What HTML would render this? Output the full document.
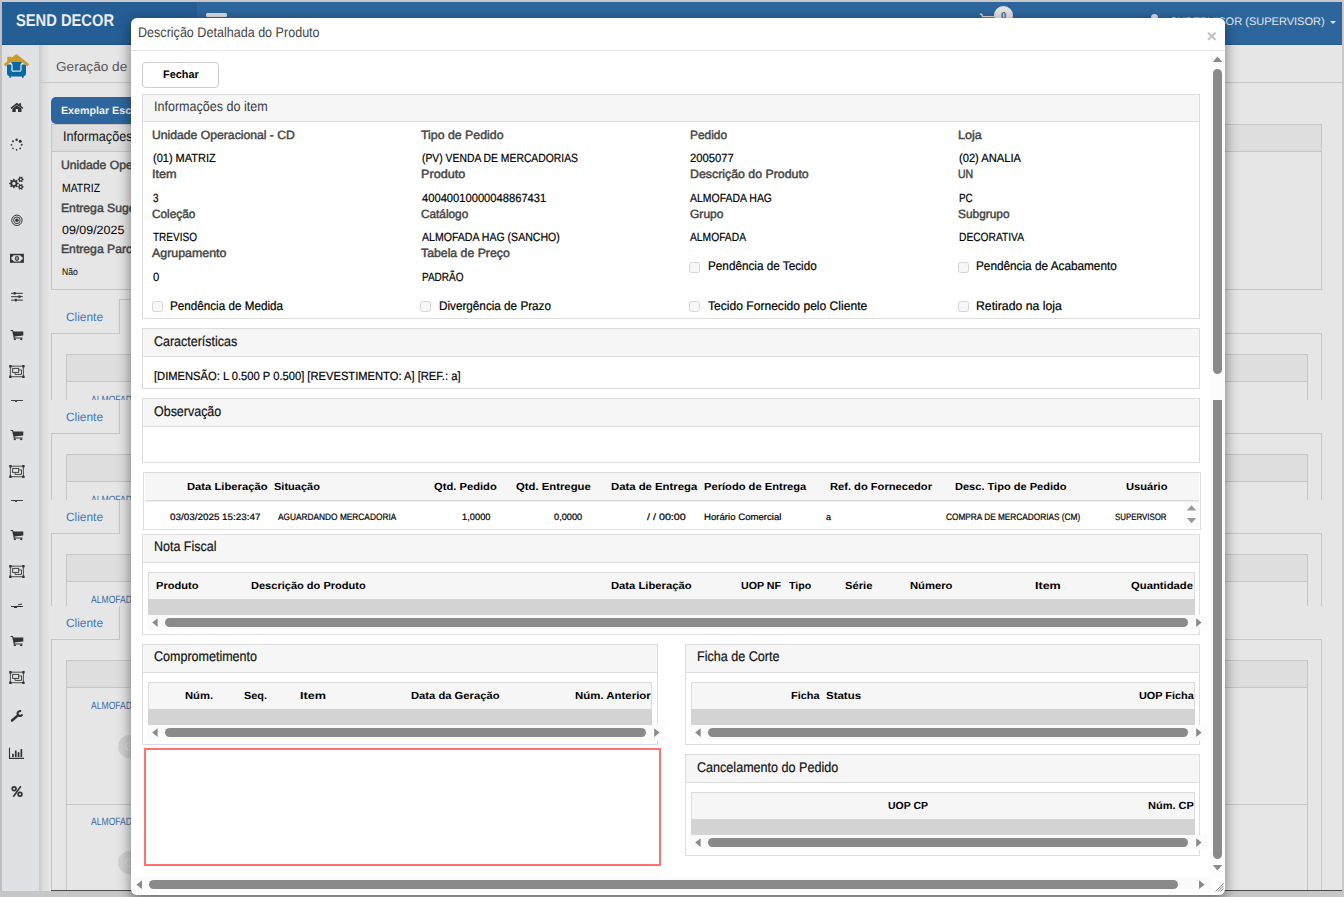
<!DOCTYPE html>
<html>
<head>
<meta charset="utf-8">
<title>Descrição Detalhada do Produto</title>
<style>
*{box-sizing:border-box;margin:0;padding:0}
html,body{width:1344px;height:897px;overflow:hidden;background:#e6e6e6;font-family:"Liberation Sans",sans-serif}
div,span,svg{position:absolute}
.t{white-space:nowrap;line-height:1;transform-origin:0 0;text-rendering:geometricPrecision}
#page{left:0;top:0;width:1344px;height:897px;overflow:hidden;background:#e6e6e6}
#mlayer{left:0;top:0;width:1344px;height:897px;overflow:hidden}
#modalbox{left:131px;top:18px;width:1094px;height:877px;background:#fff;border-radius:6px;box-shadow:0 4px 14px rgba(0,0,0,.5)}
.pn{border:1px solid #ddd;background:#fff}
.ph{left:0;top:0;right:0;height:28px;background:#f6f6f6;border-bottom:1px solid #ddd}
.gh{background:#f6f6f6;border:1px solid #ddd;border-bottom:none}
.gb{background:#d3d3d3}
.tr{background:#fafafa}
.sb{background:#8a8a8a;border-radius:5px}
.cb{width:11px;height:11px;border:1px solid #d6d6d6;border-radius:2.5px;background:#f7f7f7}
.ln{background:#c6c6c6}
</style>
</head>
<body>
<div id="page">
<div style="left:2px;top:2px;width:1340px;height:43px;background:#2d669d;border-bottom:1px solid #255b8f"></div>
<div style="left:2px;top:2px;width:195px;height:43px;background:#245e95;border-bottom:1px solid #1d5286"></div>
<div style="left:206px;top:13px;width:21px;height:3.7px;background:#dedede;border-radius:1.5px"></div>
<svg style="left:979px;top:13px" width="16" height="6" viewBox="0 0 16 6"><path d="M0.8 1.2 H2.6 L3.6 3.6 H15" stroke="#dcdcdc" stroke-width="1.3" fill="none"/></svg>
<div style="left:993.9px;top:5.8px;width:19.2px;height:19.2px;border-radius:50%;background:#e3e3e3"></div>
<div style="left:1151.4px;top:14.3px;width:6.8px;height:7px;border-radius:50%;background:#dcdcdc"></div>
<svg style="left:1330px;top:21px" width="6" height="3" viewBox="0 0 6 3"><path d="M0 0 H6 L3 3 Z" fill="#e6e6e6"/></svg>
<div style="left:2px;top:45px;width:37px;height:846px;background:#dfe1e4;"></div>
<div style="left:39px;top:45px;width:11px;height:846px;background:linear-gradient(to right,#cbcbcb,#dcdcdc 40%,#e6e6e6);"></div>
<div style="left:39px;top:82px;width:1303px;height:1px;background:#c6c6c6;"></div>
<svg style="left:2px;top:48px;overflow:visible" width="31" height="37" viewBox="0 0 31 37"><g transform="translate(0.00 0.00)"><path d="M14.4 5.9 L27 16 L25.7 18.5 L20 14 L8.8 14 L3.2 18.5 L2 16 L5.3 13.3 V8.7 H9.5 V9.8 Z" fill="#cc9a27"/><path d="M5 17.6 Q5 16.6 6.3 16.6 H8.3 Q9.4 16.6 9.4 17.8 V22 Q9.4 24 11.5 24 H17.4 Q19.5 24 19.5 22 V17.8 Q19.5 16.6 20.6 16.6 H22.6 Q24 16.6 24 17.6 V25.5 Q24 27.4 21.8 28.3 L21.3 29.9 H20.4 L19.8 28.6 H9.2 L8.6 29.9 H7.7 L7.2 28.3 Q5 27.4 5 25.5 Z" fill="#0a68a2"/><path d="M9 14 H20 L18.4 16.8 V22.4 H10.6 V16.8 Z" fill="#0a68a2"/><path d="M9.9 17.5 V22 Q9.9 23.5 11.5 23.5 H17.4 Q19 23.5 19 22 V17.5" stroke="#9fc3da" stroke-width="1" fill="none"/></g></svg>
<svg style="left:10px;top:102px;overflow:visible" width="14" height="11" viewBox="0 0 14 11"><g transform="translate(0.55 0.60)"><path d="M6.35 0.2 L0 5.2 L0.85 6.3 L6.35 2.1 L11.85 6.3 L12.7 5.2 L10.5 3.5 V0.7 H8.6 V2 Z M6.35 2.6 L1.8 6.1 V9.3 H5.2 V6.4 H7.5 V9.3 H10.9 V6.1 Z" fill="#333"/></g></svg>
<svg style="left:10px;top:138px;overflow:visible" width="14" height="14" viewBox="0 0 14 14"><g transform="translate(0.30 0.50)"><circle cx="9.91" cy="2.69" r="1.55" fill="#333"/><circle cx="6.30" cy="1.20" r="1.25" fill="#333"/><circle cx="2.69" cy="2.69" r="1.00" fill="#333"/><circle cx="1.20" cy="6.30" r="0.85" fill="#333"/><circle cx="2.69" cy="9.91" r="0.80" fill="#333"/><circle cx="6.30" cy="11.40" r="0.80" fill="#333"/><circle cx="9.91" cy="9.91" r="0.85" fill="#333"/><circle cx="11.40" cy="6.30" r="0.95" fill="#333"/></g></svg>
<svg style="left:9px;top:176px;overflow:visible" width="16" height="14" viewBox="0 0 16 14"><g transform="translate(0.10 0.30)"><path d="M9.57 6.68 L9.57 7.72 L8.16 8.18 L7.87 8.88 L8.54 10.21 L7.81 10.94 L6.48 10.27 L5.78 10.56 L5.32 11.97 L4.28 11.97 L3.82 10.56 L3.12 10.27 L1.79 10.94 L1.06 10.21 L1.73 8.88 L1.44 8.18 L0.03 7.72 L0.03 6.68 L1.44 6.22 L1.73 5.52 L1.06 4.19 L1.79 3.46 L3.12 4.13 L3.82 3.84 L4.28 2.43 L5.32 2.43 L5.78 3.84 L6.48 4.13 L7.81 3.46 L8.54 4.19 L7.87 5.52 L8.16 6.22 Z M3.10 7.20 a1.70 1.70 0 1 0 3.40 0 a1.70 1.70 0 1 0 -3.40 0 Z" fill="#333" fill-rule="evenodd"/><path d="M14.57 2.67 L14.57 3.53 L13.55 3.88 L13.25 4.40 L13.46 5.46 L12.71 5.89 L11.90 5.18 L11.30 5.18 L10.49 5.89 L9.74 5.46 L9.95 4.40 L9.65 3.88 L8.63 3.53 L8.63 2.67 L9.65 2.32 L9.95 1.80 L9.74 0.74 L10.49 0.31 L11.30 1.02 L11.90 1.02 L12.71 0.31 L13.46 0.74 L13.25 1.80 L13.55 2.32 Z M10.65 3.10 a0.95 0.95 0 1 0 1.90 0 a0.95 0.95 0 1 0 -1.90 0 Z" fill="#333" fill-rule="evenodd"/><path d="M14.57 10.17 L14.57 11.03 L13.55 11.38 L13.25 11.90 L13.46 12.96 L12.71 13.39 L11.90 12.68 L11.30 12.68 L10.49 13.39 L9.74 12.96 L9.95 11.90 L9.65 11.38 L8.63 11.03 L8.63 10.17 L9.65 9.82 L9.95 9.30 L9.74 8.24 L10.49 7.81 L11.30 8.52 L11.90 8.52 L12.71 7.81 L13.46 8.24 L13.25 9.30 L13.55 9.82 Z M10.65 10.60 a0.95 0.95 0 1 0 1.90 0 a0.95 0.95 0 1 0 -1.90 0 Z" fill="#333" fill-rule="evenodd"/></g></svg>
<svg style="left:10px;top:214px;overflow:visible" width="13" height="13" viewBox="0 0 13 13"><g transform="translate(0.90 0.30)"><circle cx="6" cy="6" r="5.2" fill="none" stroke="#333" stroke-width="1"/><circle cx="6" cy="6" r="3.3" fill="none" stroke="#333" stroke-width="1"/><circle cx="6" cy="6" r="1.8" fill="#333"/></g></svg>
<svg style="left:10px;top:253px;overflow:visible" width="15" height="10" viewBox="0 0 15 10"><g transform="translate(0.00 0.80)"><rect x="0" y="0" width="13.9" height="9" fill="#333"/><path d="M3.6 1.4 H10.3 Q10.6 3 12.5 3.3 V5.7 Q10.6 6 10.3 7.6 H3.6 Q3.3 6 1.4 5.7 V3.3 Q3.3 3 3.6 1.4 Z" fill="#e3e5e8"/><ellipse cx="6.95" cy="4.5" rx="2.1" ry="2.6" fill="#333"/><ellipse cx="6.95" cy="4.5" rx="1.1" ry="1.7" fill="#cfd1d4"/><rect x="6.6" y="3.2" width="0.8" height="2.6" fill="#333"/></g></svg>
<svg style="left:11px;top:291px;overflow:visible" width="13" height="11" viewBox="0 0 13 11"><g transform="translate(0.05 0.70)"><path d="M0 1.6 H11.8 M0 5 H11.8 M0 8.4 H11.8" stroke="#333" stroke-width="1"/><rect x="2.6" y="0.3" width="2" height="2.6" fill="#333"/><rect x="7.4" y="3.7" width="2" height="2.6" fill="#333"/><rect x="3.8" y="7.1" width="2" height="2.6" fill="#333"/></g></svg>
<svg style="left:10px;top:329px;overflow:visible" width="14" height="12" viewBox="0 0 14 12"><g transform="translate(0.60 0.80)"><path d="M0 0.3 H2.3 L2.9 1.6 H12.7 V5.6 L4 6.6 L4.2 7.6 H11.9 V8.6 H3.2 L1.6 1.3 H0 Z" fill="#333"/><rect x="3.2" y="8.6" width="2" height="1.7" fill="#333"/><rect x="9.6" y="8.6" width="2" height="1.7" fill="#333"/></g></svg>
<svg style="left:9px;top:365px;overflow:visible" width="17" height="14" viewBox="0 0 17 14"><g transform="translate(0.20 0.00)"><rect x="1.2" y="1.2" width="13" height="10.5" fill="none" stroke="#5a5a5a" stroke-width="1.1"/><rect x="0" y="0" width="2.4" height="2.4" rx="0.5" fill="#333"/><rect x="13" y="0" width="2.4" height="2.4" rx="0.5" fill="#333"/><rect x="0" y="10.5" width="2.4" height="2.4" rx="0.5" fill="#333"/><rect x="13" y="10.5" width="2.4" height="2.4" rx="0.5" fill="#333"/><path d="M5.9 7.6 V9.4 H12.3 V4.9 H9.6" fill="none" stroke="#444" stroke-width="1"/><rect x="3.4" y="3.4" width="6" height="4" fill="#dfe1e4" stroke="#444" stroke-width="1"/></g></svg>
<svg style="left:10px;top:429px;overflow:visible" width="14" height="12" viewBox="0 0 14 12"><g transform="translate(0.60 0.80)"><path d="M0 0.3 H2.3 L2.9 1.6 H12.7 V5.6 L4 6.6 L4.2 7.6 H11.9 V8.6 H3.2 L1.6 1.3 H0 Z" fill="#333"/><rect x="3.2" y="8.6" width="2" height="1.7" fill="#333"/><rect x="9.6" y="8.6" width="2" height="1.7" fill="#333"/></g></svg>
<svg style="left:9px;top:465px;overflow:visible" width="17" height="14" viewBox="0 0 17 14"><g transform="translate(0.20 0.00)"><rect x="1.2" y="1.2" width="13" height="10.5" fill="none" stroke="#5a5a5a" stroke-width="1.1"/><rect x="0" y="0" width="2.4" height="2.4" rx="0.5" fill="#333"/><rect x="13" y="0" width="2.4" height="2.4" rx="0.5" fill="#333"/><rect x="0" y="10.5" width="2.4" height="2.4" rx="0.5" fill="#333"/><rect x="13" y="10.5" width="2.4" height="2.4" rx="0.5" fill="#333"/><path d="M5.9 7.6 V9.4 H12.3 V4.9 H9.6" fill="none" stroke="#444" stroke-width="1"/><rect x="3.4" y="3.4" width="6" height="4" fill="#dfe1e4" stroke="#444" stroke-width="1"/></g></svg>
<svg style="left:10px;top:529px;overflow:visible" width="14" height="12" viewBox="0 0 14 12"><g transform="translate(0.60 0.80)"><path d="M0 0.3 H2.3 L2.9 1.6 H12.7 V5.6 L4 6.6 L4.2 7.6 H11.9 V8.6 H3.2 L1.6 1.3 H0 Z" fill="#333"/><rect x="3.2" y="8.6" width="2" height="1.7" fill="#333"/><rect x="9.6" y="8.6" width="2" height="1.7" fill="#333"/></g></svg>
<svg style="left:9px;top:565px;overflow:visible" width="17" height="14" viewBox="0 0 17 14"><g transform="translate(0.20 0.00)"><rect x="1.2" y="1.2" width="13" height="10.5" fill="none" stroke="#5a5a5a" stroke-width="1.1"/><rect x="0" y="0" width="2.4" height="2.4" rx="0.5" fill="#333"/><rect x="13" y="0" width="2.4" height="2.4" rx="0.5" fill="#333"/><rect x="0" y="10.5" width="2.4" height="2.4" rx="0.5" fill="#333"/><rect x="13" y="10.5" width="2.4" height="2.4" rx="0.5" fill="#333"/><path d="M5.9 7.6 V9.4 H12.3 V4.9 H9.6" fill="none" stroke="#444" stroke-width="1"/><rect x="3.4" y="3.4" width="6" height="4" fill="#dfe1e4" stroke="#444" stroke-width="1"/></g></svg>
<svg style="left:10px;top:635px;overflow:visible" width="14" height="12" viewBox="0 0 14 12"><g transform="translate(0.60 0.80)"><path d="M0 0.3 H2.3 L2.9 1.6 H12.7 V5.6 L4 6.6 L4.2 7.6 H11.9 V8.6 H3.2 L1.6 1.3 H0 Z" fill="#333"/><rect x="3.2" y="8.6" width="2" height="1.7" fill="#333"/><rect x="9.6" y="8.6" width="2" height="1.7" fill="#333"/></g></svg>
<svg style="left:9px;top:671px;overflow:visible" width="17" height="14" viewBox="0 0 17 14"><g transform="translate(0.20 0.00)"><rect x="1.2" y="1.2" width="13" height="10.5" fill="none" stroke="#5a5a5a" stroke-width="1.1"/><rect x="0" y="0" width="2.4" height="2.4" rx="0.5" fill="#333"/><rect x="13" y="0" width="2.4" height="2.4" rx="0.5" fill="#333"/><rect x="0" y="10.5" width="2.4" height="2.4" rx="0.5" fill="#333"/><rect x="13" y="10.5" width="2.4" height="2.4" rx="0.5" fill="#333"/><path d="M5.9 7.6 V9.4 H12.3 V4.9 H9.6" fill="none" stroke="#444" stroke-width="1"/><rect x="3.4" y="3.4" width="6" height="4" fill="#dfe1e4" stroke="#444" stroke-width="1"/></g></svg>
<div style="left:11px;top:400px;width:12px;height:1px;background:#444"></div><div style="left:14.6px;top:400.6px;width:2px;height:1.6px;background:#444"></div>
<div style="left:11px;top:500px;width:12px;height:1px;background:#444"></div><div style="left:14.6px;top:500.6px;width:2px;height:1.6px;background:#444"></div>
<div style="left:11px;top:606px;width:12px;height:1.2px;background:#333"></div><div style="left:14px;top:606.4px;width:2.6px;height:1.5px;background:#333"></div><div style="left:17.5px;top:604.3px;width:4px;height:1px;background:#333;transform:rotate(-12deg)"></div>
<svg style="left:10px;top:710px;overflow:visible" width="14" height="13" viewBox="0 0 14 13"><g transform="translate(0.70 0.00)"><path d="M1.3 10.5 L7.6 5.1" stroke="#333" stroke-width="2.5" stroke-linecap="round"/><path d="M11.60 4.34 A2.45 2.45 0 1 1 10.45 1.34" fill="none" stroke="#333" stroke-width="2"/></g></svg>
<svg style="left:9px;top:747px;overflow:visible" width="16" height="13" viewBox="0 0 16 13"><g transform="translate(0.00 0.80)"><path d="M0.5 0 V10.6 H15" stroke="#333" stroke-width="1.1" fill="none"/><rect x="3.1" y="6" width="1.7" height="3.2" fill="#333"/><rect x="5.9" y="2.7" width="1.7" height="6.5" fill="#333"/><rect x="8.7" y="4.4" width="1.7" height="4.8" fill="#333"/><rect x="11.5" y="1.3" width="1.7" height="7.9" fill="#333"/></g></svg>
<svg style="left:11px;top:786px;overflow:visible" width="13" height="12" viewBox="0 0 13 12"><g transform="translate(0.40 0.00)"><circle cx="2.7" cy="2.8" r="1.9" fill="none" stroke="#333" stroke-width="1.7"/><circle cx="8.6" cy="8.2" r="1.9" fill="none" stroke="#333" stroke-width="1.7"/><path d="M9.4 0.3 L1.9 10.7" stroke="#333" stroke-width="1.6"/></g></svg>
<div style="left:51px;top:97px;width:200px;height:27px;background:#2d669d;border-radius:5px 0 0 5px"></div>
<div style="left:51px;top:124px;width:1271px;height:166px;background:transparent;border:1px solid #c6c6c6"></div>
<div style="left:52px;top:125px;width:1269px;height:26px;background:#dedede;"></div>
<div style="left:52px;top:151px;width:1269px;height:1px;background:#c6c6c6;"></div>
<div style="left:119px;top:299px;width:1px;height:34px;background:#c6c6c6;"></div>
<div style="left:119px;top:299px;width:300px;height:1px;background:#c6c6c6;"></div>
<div style="left:51px;top:333px;width:69px;height:1px;background:#c6c6c6;"></div>
<div style="left:1200px;top:333px;width:122px;height:1px;background:#c6c6c6;"></div>
<div style="left:51px;top:333px;width:1px;height:67px;background:#c6c6c6;"></div>
<div style="left:1321px;top:333px;width:1px;height:67px;background:#c6c6c6;"></div>
<div style="left:66px;top:354px;width:1242px;height:1px;background:#c6c6c6;"></div>
<div style="left:66px;top:354px;width:1px;height:46px;background:#c6c6c6;"></div>
<div style="left:1307px;top:354px;width:1px;height:46px;background:#c6c6c6;"></div>
<div style="left:67px;top:355px;width:1240px;height:26px;background:#dedede;"></div>
<div style="left:67px;top:381px;width:1240px;height:1px;background:#c6c6c6;"></div>
<div style="left:119px;top:400px;width:1px;height:33px;background:#c6c6c6;"></div>
<div style="left:51px;top:433px;width:69px;height:1px;background:#c6c6c6;"></div>
<div style="left:1200px;top:433px;width:122px;height:1px;background:#c6c6c6;"></div>
<div style="left:51px;top:433px;width:1px;height:67px;background:#c6c6c6;"></div>
<div style="left:1321px;top:433px;width:1px;height:67px;background:#c6c6c6;"></div>
<div style="left:66px;top:454px;width:1242px;height:1px;background:#c6c6c6;"></div>
<div style="left:66px;top:454px;width:1px;height:46px;background:#c6c6c6;"></div>
<div style="left:1307px;top:454px;width:1px;height:46px;background:#c6c6c6;"></div>
<div style="left:67px;top:455px;width:1240px;height:26px;background:#dedede;"></div>
<div style="left:67px;top:481px;width:1240px;height:1px;background:#c6c6c6;"></div>
<div style="left:119px;top:500px;width:1px;height:33px;background:#c6c6c6;"></div>
<div style="left:51px;top:533px;width:69px;height:1px;background:#c6c6c6;"></div>
<div style="left:1200px;top:533px;width:122px;height:1px;background:#c6c6c6;"></div>
<div style="left:51px;top:533px;width:1px;height:73px;background:#c6c6c6;"></div>
<div style="left:1321px;top:533px;width:1px;height:73px;background:#c6c6c6;"></div>
<div style="left:66px;top:554px;width:1242px;height:1px;background:#c6c6c6;"></div>
<div style="left:66px;top:554px;width:1px;height:52px;background:#c6c6c6;"></div>
<div style="left:1307px;top:554px;width:1px;height:52px;background:#c6c6c6;"></div>
<div style="left:67px;top:555px;width:1240px;height:26px;background:#dedede;"></div>
<div style="left:67px;top:581px;width:1240px;height:1px;background:#c6c6c6;"></div>
<div style="left:119px;top:606px;width:1px;height:33px;background:#c6c6c6;"></div>
<div style="left:51px;top:639px;width:69px;height:1px;background:#c6c6c6;"></div>
<div style="left:1200px;top:639px;width:122px;height:1px;background:#c6c6c6;"></div>
<div style="left:51px;top:639px;width:1px;height:251px;background:#c6c6c6;"></div>
<div style="left:1321px;top:639px;width:1px;height:251px;background:#c6c6c6;"></div>
<div style="left:66px;top:660px;width:1242px;height:1px;background:#c6c6c6;"></div>
<div style="left:66px;top:660px;width:1px;height:230px;background:#c6c6c6;"></div>
<div style="left:1307px;top:660px;width:1px;height:230px;background:#c6c6c6;"></div>
<div style="left:67px;top:661px;width:1240px;height:26px;background:#dedede;"></div>
<div style="left:67px;top:687px;width:1240px;height:1px;background:#c6c6c6;"></div>
<div style="left:67px;top:804px;width:1240px;height:1px;background:#c6c6c6;"></div>
<div style="left:51px;top:890px;width:1291px;height:1px;background:#4a4a4a;"></div>
<div style="left:118px;top:734.5px;width:23px;height:23px;border-radius:50%;background:#d2d2d2"></div>
<div style="left:125px;top:741.5px;width:9px;height:9px;border-radius:50%;border:1.5px solid #e4e4e4"></div>
<div style="left:118px;top:850.5px;width:23px;height:23px;border-radius:50%;background:#d2d2d2"></div>
<div style="left:125px;top:857.5px;width:9px;height:9px;border-radius:50%;border:1.5px solid #e4e4e4"></div>
<div style="left:0px;top:0px;width:1344px;height:2px;background:#c8c8c8;"></div>
<div style="left:0px;top:0px;width:2px;height:897px;background:#c0c0c0;"></div>
<div style="left:1342px;top:0px;width:2px;height:897px;background:#c8c8c8;"></div>
<div style="left:0px;top:891px;width:1344px;height:6px;background:#c6c6c6;"></div>

<span class="t" style="left:15.75px;top:12px;font-size:17px;color:#ececec;font-weight:bold;transform:scaleX(0.8645);">SEND DECOR</span>
<span class="t" style="left:55.75px;top:60px;font-size:13px;color:#555;transform:scaleX(1.0488);">Geração de Pedido</span>
<span class="t" style="left:61.40px;top:106px;font-size:10.5px;color:#f2f2f2;font-weight:bold;transform:scaleX(1.0173);">Exemplar Escolhido</span>
<span class="t" style="left:62.80px;top:129px;font-size:14px;color:#111;transform:scaleX(0.9023);">Informações</span>
<span class="t" style="left:61.40px;top:159px;font-size:12px;color:#454545;transform:scaleX(1.0150);-webkit-text-stroke:0.45px #454545;">Unidade Operacional</span>
<span class="t" style="left:61.70px;top:182px;font-size:12px;color:#000;transform:scaleX(0.8691);">MATRIZ</span>
<span class="t" style="left:61.20px;top:202px;font-size:12px;color:#454545;transform:scaleX(1.0150);-webkit-text-stroke:0.45px #454545;">Entrega Sugerida</span>
<span class="t" style="left:61.70px;top:224px;font-size:12px;color:#000;transform:scaleX(1.0373);">09/09/2025</span>
<span class="t" style="left:61.20px;top:243px;font-size:12px;color:#454545;transform:scaleX(1.0150);-webkit-text-stroke:0.45px #454545;">Entrega Parcial</span>
<span class="t" style="left:62.10px;top:268px;font-size:9.75px;color:#000;transform:scaleX(0.8776);">Não</span>
<span class="t" style="left:1169.70px;top:17px;font-size:11px;color:#e6e6e6;transform:scaleX(1.0029);">SUPERVISOR (SUPERVISOR)</span>
<span class="t" style="left:1001.00px;top:12px;font-size:10px;color:#2d5f9a;font-weight:bold;transform:scaleX(0.9348);">0</span>
<span class="t" style="left:66.00px;top:311px;font-size:12px;color:#3f77b5;transform:scaleX(0.9904);">Cliente</span>
<span class="t" style="left:66.00px;top:411px;font-size:12px;color:#3f77b5;transform:scaleX(0.9904);">Cliente</span>
<span class="t" style="left:66.00px;top:511px;font-size:12px;color:#3f77b5;transform:scaleX(0.9904);">Cliente</span>
<span class="t" style="left:66.00px;top:617px;font-size:12px;color:#3f77b5;transform:scaleX(0.9904);">Cliente</span>
<div style="left:0;top:380px;width:400px;height:20px;overflow:hidden"><span class="t" style="left:90.60px;top:15px;font-size:10.5px;color:#3a6aa5;transform:scaleX(0.8169);">ALMOFADA HAG</span></div>
<div style="left:0;top:494px;width:400px;height:6px;overflow:hidden"><span class="t" style="left:90.60px;top:1px;font-size:10.5px;color:#3a6aa5;transform:scaleX(0.8169);">ALMOFADA HAG</span></div>
<div style="left:0;top:590px;width:400px;height:16px;overflow:hidden"><span class="t" style="left:90.60px;top:5px;font-size:10.5px;color:#3a6aa5;transform:scaleX(0.8169);">ALMOFADA HAG</span></div>
<span class="t" style="left:90.60px;top:701px;font-size:10.5px;color:#3a6aa5;transform:scaleX(0.8169);">ALMOFADA HAG</span>
<span class="t" style="left:90.60px;top:817px;font-size:10.5px;color:#3a6aa5;transform:scaleX(0.8169);">ALMOFADA HAG</span>
</div>
<div id="modalbox"></div>
<div id="mlayer">
<div style="left:131px;top:50px;width:1094px;height:1px;background:#e5e5e5"></div>
<svg style="left:1207px;top:32px" width="10" height="9" viewBox="0 0 10 9"><path d="M1 0.8 L8.6 7.8 M8.6 0.8 L1 7.8" stroke="#c2c2c2" stroke-width="2.2" fill="none"/></svg>
<!-- vertical scrollbar -->
<div class="tr" style="left:1210px;top:51px;width:15px;height:826px;background:#fcfcfc"></div>
<svg style="left:1212px;top:56px" width="11" height="6" viewBox="0 0 11 6"><path d="M0.8 6 L5.5 0.6 L10.2 6 Z" fill="#8a8a8a"/></svg>
<div class="sb" style="left:1213px;top:69px;width:9px;height:305px;border-radius:4.5px"></div>
<div class="sb" style="left:1213px;top:400px;width:9px;height:459px;border-radius:0 0 4.5px 4.5px"></div>
<svg style="left:1212px;top:865px" width="11" height="6" viewBox="0 0 11 6"><path d="M0.8 0 L5.5 5.4 L10.2 0 Z" fill="#8a8a8a"/></svg>
<!-- bottom scrollbar -->
<div class="tr" style="left:132px;top:877px;width:1078px;height:16px;background:#fbfbfb"></div>
<svg style="left:136px;top:880px" width="6" height="10" viewBox="0 0 6 10"><path d="M6 0.3 L0.4 4.7 L6 9.1 Z" fill="#8a8a8a"/></svg>
<div class="sb" style="left:149px;top:880px;width:1029px;height:9px;border-radius:4.5px"></div>
<svg style="left:1199px;top:880px" width="6" height="10" viewBox="0 0 6 10"><path d="M0 0.3 L5.6 4.7 L0 9.1 Z" fill="#8a8a8a"/></svg>
<svg style="left:1215px;top:883px" width="9" height="9" viewBox="0 0 9 9"><path d="M8.5 0.5 L0.5 8.5 M8.5 3 L3 8.5 M8.5 5.5 L5.5 8.5" stroke="#777" stroke-width="1" fill="none"/></svg>
<!-- Fechar -->
<div style="left:142px;top:62px;width:77px;height:26px;border:1px solid #ccc;border-radius:4px;background:#fff"></div>
<!-- panel 1 -->
<div class="pn" style="left:142px;top:94px;width:1058px;height:225px"><div class="ph" style="height:27px"></div></div>
<div class="cb" style="left:689px;top:262px"></div>
<div class="cb" style="left:958px;top:262px"></div>
<div class="cb" style="left:152px;top:301px"></div>
<div class="cb" style="left:420px;top:301px"></div>
<div class="cb" style="left:689px;top:301px"></div>
<div class="cb" style="left:958px;top:301px"></div>
<!-- panel 2,3 -->
<div class="pn" style="left:142px;top:328px;width:1058px;height:61px"><div class="ph"></div></div>
<div class="pn" style="left:142px;top:398px;width:1058px;height:65px"><div class="ph"></div></div>
<!-- table -->
<div class="pn" style="left:143px;top:472px;width:1058px;height:58px"></div>
<div style="left:145px;top:473px;width:1054px;height:27px;background:#f6f6f6"></div>
<div style="left:145px;top:500px;width:1054px;height:1px;background:#dadada"></div>
<div style="left:145px;top:501px;width:1054px;height:1px;background:#ececec"></div>
<div style="left:1184px;top:502px;width:15px;height:25px;background:#fafafa"></div>
<svg style="left:1186px;top:505px" width="11" height="6" viewBox="0 0 11 6"><path d="M0.8 5.4 L5.5 0.2 L10.2 5.4 Z" fill="#9a9a9a"/></svg>
<svg style="left:1186px;top:518px" width="11" height="6" viewBox="0 0 11 6"><path d="M0.8 0 L5.5 5.2 L10.2 0 Z" fill="#9a9a9a"/></svg>
<!-- Nota fiscal -->
<div class="pn" style="left:142px;top:534px;width:1058px;height:101px"><div class="ph"></div></div>
<div class="gh" style="left:148px;top:572px;width:1047px;height:27px"></div>
<div class="gb" style="left:148px;top:599px;width:1047px;height:16px"></div>
<div class="tr" style="left:147px;top:615px;width:1052px;height:15px"></div>
<svg style="left:152px;top:618px" width="6" height="10" viewBox="0 0 6 10"><path d="M5.6 0.2 L0.2 4.6 L5.6 9 Z" fill="#8a8a8a"/></svg>
<div class="sb" style="left:165px;top:618px;width:1023px;height:9px;border-radius:4.5px"></div>
<svg style="left:1196px;top:618px" width="6" height="10" viewBox="0 0 6 10"><path d="M0.2 0.2 L5.6 4.6 L0.2 9 Z" fill="#8a8a8a"/></svg>
<!-- Comprometimento -->
<div class="pn" style="left:142px;top:644px;width:516px;height:101px"><div class="ph"></div></div>
<div class="gh" style="left:148px;top:682px;width:504px;height:27px"></div>
<div class="gb" style="left:148px;top:709px;width:504px;height:16px"></div>
<div class="tr" style="left:147px;top:725px;width:510px;height:15px"></div>
<svg style="left:152px;top:728px" width="6" height="10" viewBox="0 0 6 10"><path d="M5.6 0.2 L0.2 4.6 L5.6 9 Z" fill="#8a8a8a"/></svg>
<div class="sb" style="left:165px;top:728px;width:481px;height:9px;border-radius:4.5px"></div>
<svg style="left:654px;top:728px" width="6" height="10" viewBox="0 0 6 10"><path d="M0.2 0.2 L5.6 4.6 L0.2 9 Z" fill="#8a8a8a"/></svg>
<!-- red box -->
<div style="left:144px;top:748px;width:517px;height:118px;border:2px solid #ff7272;background:#fff"></div>
<!-- Ficha de corte -->
<div class="pn" style="left:685px;top:644px;width:515px;height:101px"><div class="ph"></div></div>
<div class="gh" style="left:691px;top:682px;width:504px;height:27px"></div>
<div class="gb" style="left:691px;top:709px;width:504px;height:16px"></div>
<div class="tr" style="left:690px;top:725px;width:509px;height:15px"></div>
<svg style="left:695px;top:728px" width="6" height="10" viewBox="0 0 6 10"><path d="M5.6 0.2 L0.2 4.6 L5.6 9 Z" fill="#8a8a8a"/></svg>
<div class="sb" style="left:708px;top:728px;width:480px;height:9px;border-radius:4.5px"></div>
<svg style="left:1196px;top:728px" width="6" height="10" viewBox="0 0 6 10"><path d="M0.2 0.2 L5.6 4.6 L0.2 9 Z" fill="#8a8a8a"/></svg>
<!-- Cancelamento -->
<div class="pn" style="left:685px;top:754px;width:515px;height:102px"><div class="ph"></div></div>
<div class="gh" style="left:691px;top:792px;width:504px;height:27px"></div>
<div class="gb" style="left:691px;top:819px;width:504px;height:16px"></div>
<div class="tr" style="left:690px;top:835px;width:509px;height:15px"></div>
<svg style="left:695px;top:838px" width="6" height="10" viewBox="0 0 6 10"><path d="M5.6 0.2 L0.2 4.6 L5.6 9 Z" fill="#8a8a8a"/></svg>
<div class="sb" style="left:708px;top:838px;width:480px;height:9px;border-radius:4.5px"></div>
<svg style="left:1196px;top:838px" width="6" height="10" viewBox="0 0 6 10"><path d="M0.2 0.2 L5.6 4.6 L0.2 9 Z" fill="#8a8a8a"/></svg>
<!-- patches -->
<div style="left:1193px;top:615px;width:14px;height:15px;background:#fbfbfb"></div>
<div style="left:651px;top:725px;width:14px;height:15px;background:#fbfbfb"></div>
<div style="left:1193px;top:725px;width:14px;height:15px;background:#fbfbfb"></div>
<div style="left:1193px;top:835px;width:14px;height:15px;background:#fbfbfb"></div>

<svg style="left:1196px;top:618px" width="6" height="10" viewBox="0 0 6 10"><path d="M0.2 0.2 L5.6 4.6 L0.2 9 Z" fill="#8a8a8a"/></svg>
<svg style="left:654px;top:728px" width="6" height="10" viewBox="0 0 6 10"><path d="M0.2 0.2 L5.6 4.6 L0.2 9 Z" fill="#8a8a8a"/></svg>
<svg style="left:1196px;top:728px" width="6" height="10" viewBox="0 0 6 10"><path d="M0.2 0.2 L5.6 4.6 L0.2 9 Z" fill="#8a8a8a"/></svg>
<svg style="left:1196px;top:838px" width="6" height="10" viewBox="0 0 6 10"><path d="M0.2 0.2 L5.6 4.6 L0.2 9 Z" fill="#8a8a8a"/></svg>

<span class="t" style="left:137.80px;top:25px;font-size:14px;color:#444;transform:scaleX(0.8975);">Descrição Detalhada do Produto</span>
<span class="t" style="left:163.00px;top:70px;font-size:11px;color:#000;font-weight:bold;transform:scaleX(0.9909);">Fechar</span>
<span class="t" style="left:154.00px;top:99px;font-size:14px;color:#3a3a3a;transform:scaleX(0.8968);">Informações do item</span>
<span class="t" style="left:154.00px;top:334px;font-size:14px;color:#111;transform:scaleX(0.8917);-webkit-text-stroke:0.2px #111;">Características</span>
<span class="t" style="left:154.00px;top:404px;font-size:14px;color:#111;transform:scaleX(0.8909);-webkit-text-stroke:0.2px #111;">Observação</span>
<span class="t" style="left:154.00px;top:539px;font-size:14px;color:#111;transform:scaleX(0.8925);-webkit-text-stroke:0.2px #111;">Nota Fiscal</span>
<span class="t" style="left:154.00px;top:649px;font-size:14px;color:#111;transform:scaleX(0.8944);-webkit-text-stroke:0.2px #111;">Comprometimento</span>
<span class="t" style="left:696.50px;top:649px;font-size:14px;color:#111;transform:scaleX(0.8984);-webkit-text-stroke:0.2px #111;">Ficha de Corte</span>
<span class="t" style="left:696.50px;top:760px;font-size:14px;color:#111;transform:scaleX(0.8983);-webkit-text-stroke:0.2px #111;">Cancelamento do Pedido</span>
<span class="t" style="left:152.10px;top:129px;font-size:12px;color:#454545;transform:scaleX(1.0153);-webkit-text-stroke:0.45px #454545;">Unidade Operacional - CD</span>
<span class="t" style="left:420.75px;top:129px;font-size:12px;color:#454545;transform:scaleX(1.0276);-webkit-text-stroke:0.45px #454545;">Tipo de Pedido</span>
<span class="t" style="left:689.50px;top:129px;font-size:12px;color:#454545;transform:scaleX(0.9900);-webkit-text-stroke:0.45px #454545;">Pedido</span>
<span class="t" style="left:958.00px;top:129px;font-size:12px;color:#454545;transform:scaleX(1.0468);-webkit-text-stroke:0.45px #454545;">Loja</span>
<span class="t" style="left:152.10px;top:168px;font-size:12px;color:#454545;transform:scaleX(1.0560);-webkit-text-stroke:0.45px #454545;">Item</span>
<span class="t" style="left:420.75px;top:168px;font-size:12px;color:#454545;transform:scaleX(1.0528);-webkit-text-stroke:0.45px #454545;">Produto</span>
<span class="t" style="left:689.50px;top:168px;font-size:12px;color:#454545;transform:scaleX(1.0290);-webkit-text-stroke:0.45px #454545;">Descrição do Produto</span>
<span class="t" style="left:958.00px;top:168px;font-size:12px;color:#454545;transform:scaleX(0.8793);-webkit-text-stroke:0.45px #454545;">UN</span>
<span class="t" style="left:152.10px;top:208px;font-size:12px;color:#454545;transform:scaleX(0.9857);-webkit-text-stroke:0.45px #454545;">Coleção</span>
<span class="t" style="left:420.75px;top:208px;font-size:12px;color:#454545;transform:scaleX(0.9834);-webkit-text-stroke:0.45px #454545;">Catálogo</span>
<span class="t" style="left:689.50px;top:208px;font-size:12px;color:#454545;transform:scaleX(1.0042);-webkit-text-stroke:0.45px #454545;">Grupo</span>
<span class="t" style="left:958.00px;top:208px;font-size:12px;color:#454545;transform:scaleX(0.9895);-webkit-text-stroke:0.45px #454545;">Subgrupo</span>
<span class="t" style="left:152.10px;top:247px;font-size:12px;color:#454545;transform:scaleX(1.0327);-webkit-text-stroke:0.45px #454545;">Agrupamento</span>
<span class="t" style="left:420.75px;top:247px;font-size:12px;color:#454545;transform:scaleX(1.0232);-webkit-text-stroke:0.45px #454545;">Tabela de Preço</span>
<span class="t" style="left:153.00px;top:152px;font-size:12px;color:#000;transform:scaleX(0.9167);-webkit-text-stroke:0.2px #000;">(01) MATRIZ</span>
<span class="t" style="left:422.00px;top:152px;font-size:12px;color:#000;transform:scaleX(0.8633);-webkit-text-stroke:0.2px #000;">(PV) VENDA DE MERCADORIAS</span>
<span class="t" style="left:690.00px;top:152px;font-size:12px;color:#000;transform:scaleX(0.9365);-webkit-text-stroke:0.2px #000;">2005077</span>
<span class="t" style="left:959.25px;top:152px;font-size:12px;color:#000;transform:scaleX(0.9295);-webkit-text-stroke:0.2px #000;">(02) ANALIA</span>
<span class="t" style="left:153.25px;top:192px;font-size:12px;color:#000;transform:scaleX(0.8224);-webkit-text-stroke:0.2px #000;">3</span>
<span class="t" style="left:422.00px;top:192px;font-size:12px;color:#000;transform:scaleX(0.9308);-webkit-text-stroke:0.2px #000;">40040010000048867431</span>
<span class="t" style="left:690.00px;top:192px;font-size:12px;color:#000;transform:scaleX(0.8721);-webkit-text-stroke:0.2px #000;">ALMOFADA HAG</span>
<span class="t" style="left:958.75px;top:192px;font-size:12px;color:#000;transform:scaleX(0.8247);-webkit-text-stroke:0.2px #000;">PC</span>
<span class="t" style="left:153.00px;top:231px;font-size:12px;color:#000;transform:scaleX(0.8351);-webkit-text-stroke:0.2px #000;">TREVISO</span>
<span class="t" style="left:421.50px;top:231px;font-size:12px;color:#000;transform:scaleX(0.8791);-webkit-text-stroke:0.2px #000;">ALMOFADA HAG (SANCHO)</span>
<span class="t" style="left:690.00px;top:231px;font-size:12px;color:#000;transform:scaleX(0.8568);-webkit-text-stroke:0.2px #000;">ALMOFADA</span>
<span class="t" style="left:958.75px;top:231px;font-size:12px;color:#000;transform:scaleX(0.8526);-webkit-text-stroke:0.2px #000;">DECORATIVA</span>
<span class="t" style="left:153.00px;top:271px;font-size:12px;color:#000;transform:scaleX(0.9346);-webkit-text-stroke:0.2px #000;">0</span>
<span class="t" style="left:421.50px;top:271px;font-size:12px;color:#000;transform:scaleX(0.8334);-webkit-text-stroke:0.2px #000;">PADRÃO</span>
<span class="t" style="left:707.50px;top:260px;font-size:12.5px;color:#000;transform:scaleX(0.9388);-webkit-text-stroke:0.2px #000;">Pendência de Tecido</span>
<span class="t" style="left:975.75px;top:260px;font-size:12.5px;color:#000;transform:scaleX(0.9420);-webkit-text-stroke:0.2px #000;">Pendência de Acabamento</span>
<span class="t" style="left:170.00px;top:300px;font-size:12.5px;color:#000;transform:scaleX(0.9344);-webkit-text-stroke:0.2px #000;">Pendência de Medida</span>
<span class="t" style="left:438.75px;top:300px;font-size:12.5px;color:#000;transform:scaleX(0.9371);-webkit-text-stroke:0.2px #000;">Divergência de Prazo</span>
<span class="t" style="left:707.50px;top:300px;font-size:12.5px;color:#000;transform:scaleX(0.9670);-webkit-text-stroke:0.2px #000;">Tecido Fornecido pelo Cliente</span>
<span class="t" style="left:975.75px;top:300px;font-size:12.5px;color:#000;transform:scaleX(0.9793);-webkit-text-stroke:0.2px #000;">Retirado na loja</span>
<span class="t" style="left:154.00px;top:370px;font-size:12px;color:#000;transform:scaleX(0.9309);-webkit-text-stroke:0.2px #000;">[DIMENSÃO: L 0.500 P 0.500] [REVESTIMENTO: A] [REF.: a]</span>
<span class="t" style="left:186.75px;top:483px;font-size:10.25px;color:#000;font-weight:bold;transform:scaleX(1.0952);">Data Liberação</span>
<span class="t" style="left:273.75px;top:483px;font-size:10.25px;color:#000;font-weight:bold;transform:scaleX(1.0764);">Situação</span>
<span class="t" style="left:434.00px;top:483px;font-size:10.25px;color:#000;font-weight:bold;transform:scaleX(1.0910);">Qtd. Pedido</span>
<span class="t" style="left:515.50px;top:483px;font-size:10.25px;color:#000;font-weight:bold;transform:scaleX(1.1028);">Qtd. Entregue</span>
<span class="t" style="left:611.00px;top:483px;font-size:10.25px;color:#000;font-weight:bold;transform:scaleX(1.1051);">Data de Entrega</span>
<span class="t" style="left:704.00px;top:483px;font-size:10.25px;color:#000;font-weight:bold;transform:scaleX(1.0879);">Período de Entrega</span>
<span class="t" style="left:830.00px;top:483px;font-size:10.25px;color:#000;font-weight:bold;transform:scaleX(1.0855);">Ref. do Fornecedor</span>
<span class="t" style="left:955.00px;top:483px;font-size:10.25px;color:#000;font-weight:bold;transform:scaleX(1.0775);">Desc. Tipo de Pedido</span>
<span class="t" style="left:1125.50px;top:483px;font-size:10.25px;color:#000;font-weight:bold;transform:scaleX(1.0872);">Usuário</span>
<span class="t" style="left:170.00px;top:513px;font-size:9.25px;color:#000;transform:scaleX(1.0663);-webkit-text-stroke:0.2px #000;">03/03/2025 15:23:47</span>
<span class="t" style="left:277.50px;top:513px;font-size:9.25px;color:#000;transform:scaleX(0.8987);-webkit-text-stroke:0.2px #000;">AGUARDANDO MERCADORIA</span>
<span class="t" style="left:462.00px;top:513px;font-size:9.25px;color:#000;transform:scaleX(1.0072);-webkit-text-stroke:0.2px #000;">1,0000</span>
<span class="t" style="left:554.00px;top:513px;font-size:9.25px;color:#000;transform:scaleX(0.9983);-webkit-text-stroke:0.2px #000;">0,0000</span>
<span class="t" style="left:647.25px;top:513px;font-size:9.25px;color:#000;transform:scaleX(1.1589);-webkit-text-stroke:0.2px #000;">/ / 00:00</span>
<span class="t" style="left:703.50px;top:513px;font-size:9.25px;color:#000;transform:scaleX(1.0396);-webkit-text-stroke:0.2px #000;">Horário Comercial</span>
<span class="t" style="left:825.75px;top:513px;font-size:9.25px;color:#000;transform:scaleX(0.9697);-webkit-text-stroke:0.2px #000;">a</span>
<span class="t" style="left:946.00px;top:513px;font-size:9.25px;color:#000;transform:scaleX(0.8945);-webkit-text-stroke:0.2px #000;">COMPRA DE MERCADORIAS (CM)</span>
<span class="t" style="left:1114.75px;top:513px;font-size:9.25px;color:#000;transform:scaleX(0.8512);-webkit-text-stroke:0.2px #000;">SUPERVISOR</span>
<span class="t" style="left:155.50px;top:582px;font-size:10.25px;color:#000;font-weight:bold;transform:scaleX(1.0815);">Produto</span>
<span class="t" style="left:250.75px;top:582px;font-size:10.25px;color:#000;font-weight:bold;transform:scaleX(1.0773);">Descrição do Produto</span>
<span class="t" style="left:610.50px;top:582px;font-size:10.25px;color:#000;font-weight:bold;transform:scaleX(1.0952);">Data Liberação</span>
<span class="t" style="left:741.00px;top:582px;font-size:10.25px;color:#000;font-weight:bold;transform:scaleX(1.0377);">UOP NF</span>
<span class="t" style="left:788.50px;top:582px;font-size:10.25px;color:#000;font-weight:bold;transform:scaleX(1.0371);">Tipo</span>
<span class="t" style="left:844.50px;top:582px;font-size:10.25px;color:#000;font-weight:bold;transform:scaleX(1.0966);">Série</span>
<span class="t" style="left:910.25px;top:582px;font-size:10.25px;color:#000;font-weight:bold;transform:scaleX(1.0972);">Número</span>
<span class="t" style="left:1035.00px;top:582px;font-size:10.25px;color:#000;font-weight:bold;transform:scaleX(1.2216);">Item</span>
<span class="t" style="left:1131.25px;top:582px;font-size:10.25px;color:#000;font-weight:bold;transform:scaleX(1.0995);">Quantidade</span>
<span class="t" style="left:184.50px;top:692px;font-size:10.25px;color:#000;font-weight:bold;transform:scaleX(1.0927);">Núm.</span>
<span class="t" style="left:243.75px;top:692px;font-size:10.25px;color:#000;font-weight:bold;transform:scaleX(1.0620);">Seq.</span>
<span class="t" style="left:300.25px;top:692px;font-size:10.25px;color:#000;font-weight:bold;transform:scaleX(1.2335);">Item</span>
<span class="t" style="left:410.75px;top:692px;font-size:10.25px;color:#000;font-weight:bold;transform:scaleX(1.0939);">Data da Geração</span>
<span class="t" style="left:574.75px;top:692px;font-size:10.25px;color:#000;font-weight:bold;transform:scaleX(1.1145);">Núm. Anterior</span>
<span class="t" style="left:791.00px;top:692px;font-size:10.25px;color:#000;font-weight:bold;transform:scaleX(1.0642);">Ficha</span>
<span class="t" style="left:825.75px;top:692px;font-size:10.25px;color:#000;font-weight:bold;transform:scaleX(1.1172);">Status</span>
<span class="t" style="left:1138.50px;top:692px;font-size:10.25px;color:#000;font-weight:bold;transform:scaleX(1.0599);">UOP Ficha</span>
<span class="t" style="left:888.25px;top:802px;font-size:10.25px;color:#000;font-weight:bold;transform:scaleX(1.0224);">UOP CP</span>
<span class="t" style="left:1147.50px;top:802px;font-size:10.25px;color:#000;font-weight:bold;transform:scaleX(1.0710);">Núm. CP</span>
</div>
</body>
</html>
